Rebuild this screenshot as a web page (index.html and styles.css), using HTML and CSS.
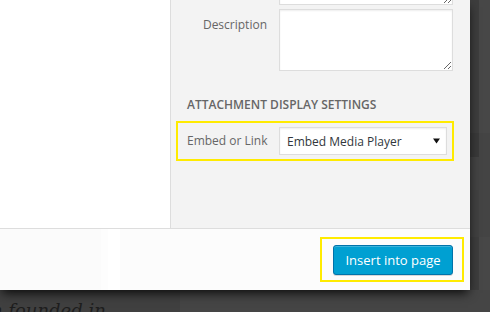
FILE: index.html
```html
<!DOCTYPE html>
<html lang="en">
<head>
<meta charset="utf-8">
<title>Insert Media</title>
<link rel="stylesheet" href="styles.css">
</head>
<body>
<div class="stage">
  <div class="page">
    <div class="page-top">
      <div class="page-spacer"></div>
      <div class="strip-a"></div>
      <div class="strip-b"></div>
    </div>
    <div class="page-bottom">
      <div class="pb-left"><p class="page-text">n founded in</p></div>
      <div class="pb-right"></div>
    </div>
  </div>

  <div class="modal">
    <div class="frame">
      <div class="media"></div>
      <aside class="sidebar">
        <div class="row row-cut">
          <span class="spacer"></span>
          <textarea class="field cut"></textarea>
        </div>
        <div class="row">
          <label class="label">Description</label>
          <textarea class="field desc"></textarea>
        </div>
        <h2 class="heading">Attachment Display Settings</h2>
        <div class="highlight setting">
          <span class="setting-label">Embed or Link</span>
          <div class="select">
            <span>Embed Media Player</span>
            <svg class="caret" width="7" height="6" viewBox="0 0 7 6"><path d="M0 0.5H7L3.5 5.5Z" fill="#111"/></svg>
          </div>
        </div>
      </aside>
    </div>
    <div class="toolbar">
      <div class="highlight btn-wrap">
        <button class="button-primary" type="button">Insert into page</button>
      </div>
    </div>
  </div>
</div>
</body>
</html>
```

FILE: styles.css
```css
html, body {
  margin: 0;
  padding: 0;
}

body {
  width: 490px;
  height: 312px;
  overflow: hidden;
  background: #464646;
  font-family: "Open Sans", "Liberation Sans", sans-serif;
}

.stage {
  display: grid;
  width: 490px;
  height: 312px;
}

.page,
.modal {
  grid-area: 1 / 1;
}

/* background page under the overlay */
.page {
  display: flex;
  flex-direction: column;
}

.page-top {
  height: 290px;
  display: flex;
}

.page-spacer {
  width: 470px;
}

.strip-a {
  width: 9px;
  background: linear-gradient(to bottom,
    #3d3d3d 0 133px,
    #393939 133px 157px,
    #434343 157px 190px,
    #404040 190px 237px,
    #3d3d3d 237px);
}

.strip-b {
  flex: 1;
  background: linear-gradient(to bottom,
    #474747 0 133px,
    #444444 133px 237px,
    #474747 237px);
}

.page-bottom {
  flex: 1;
  display: flex;
}

.pb-left {
  width: 180px;
  background: #404040;
  overflow: hidden;
}

.pb-right {
  flex: 1;
  background: #454545;
}

.page-text {
  margin: 0;
  padding-top: 10px;
  text-indent: -9px;
  white-space: nowrap;
  font-family: "DejaVu Serif", "Liberation Serif", serif;
  font-style: italic;
  font-size: 18px;
  color: #1e1e1e;
}

/* modal */
.modal {
  align-self: start;
  width: 470px;
  height: 290px;
  display: flex;
  flex-direction: column;
  box-shadow: 0 5px 10px -2px rgba(0, 0, 0, 0.85);
}

.frame {
  height: 228px;
  display: flex;
}

.media {
  width: 170px;
  background: #fff;
  border-right: 1px solid #dddddd;
}

.sidebar {
  flex: 1;
  background: #f3f3f3;
  padding: 0 16px;
  overflow: hidden;
}

.row {
  display: flex;
  gap: 12px;
}

.spacer {
  width: 80px;
  flex: none;
}

.label {
  width: 80px;
  flex: none;
  text-align: right;
  font-size: 12px;
  line-height: 16px;
  color: #666;
  padding-top: 12px;
}

.field {
  display: block;
  box-sizing: border-box;
  width: 174px;
  margin: 0;
  padding: 4px;
  border: 1px solid #dddddd;
  background: #fff;
  box-shadow: inset 0 1px 2px rgba(0, 0, 0, 0.07);
  font: inherit;
  resize: vertical;
  outline: none;
}

.field.cut {
  height: 45px;
  margin-top: -40px;
}

.field.desc {
  height: 62px;
  margin-top: 4px;
}

.heading {
  margin: 26px 0 0;
  font-size: 12px;
  line-height: 16px;
  font-weight: 600;
  text-transform: uppercase;
  color: #666;
}

.highlight {
  border: 2px solid #ffeb00;
}

.setting {
  margin: 8px 0 0 -11px;
  padding: 4px 5px 4px 9px;
  display: flex;
  align-items: center;
  gap: 12px;
}

.setting-label {
  width: 80px;
  flex: none;
  white-space: nowrap;
  font-size: 12px;
  line-height: 16px;
  color: #666;
}

.select {
  box-sizing: border-box;
  width: 168px;
  height: 28px;
  border: 1px solid #dddddd;
  background: #fff;
  box-shadow: inset 0 1px 2px rgba(0, 0, 0, 0.07);
  display: flex;
  align-items: center;
  justify-content: space-between;
  padding: 0 6px 0 7px;
  font-size: 12px;
  color: #32373c;
}

.caret {
  display: block;
}

/* toolbar */
.toolbar {
  flex: 1;
  border-top: 1px solid #dddddd;
  background: linear-gradient(to right,
    #fbfbfb 0 101px,
    #fdfdfd 101px 108px,
    #ffffff 108px 120px,
    #fcfcfc 120px);
  display: flex;
  justify-content: flex-end;
  align-items: center;
  padding-right: 6px;
}

.btn-wrap {
  padding: 6px 9px 5px 11px;
  display: flex;
}

.button-primary {
  box-sizing: border-box;
  width: 120px;
  height: 30px;
  margin: 0;
  padding: 0;
  border: 1px solid #0073aa;
  border-radius: 3px;
  background: #00a0d2;
  box-shadow: inset 0 1px 0 rgba(120, 200, 230, 0.5), 0 1px 0 rgba(0, 0, 0, 0.15);
  color: #fff;
  font-family: "Open Sans", "Liberation Sans", sans-serif;
  font-size: 13px;
  line-height: 28px;
  text-align: center;
  cursor: pointer;
}
```
